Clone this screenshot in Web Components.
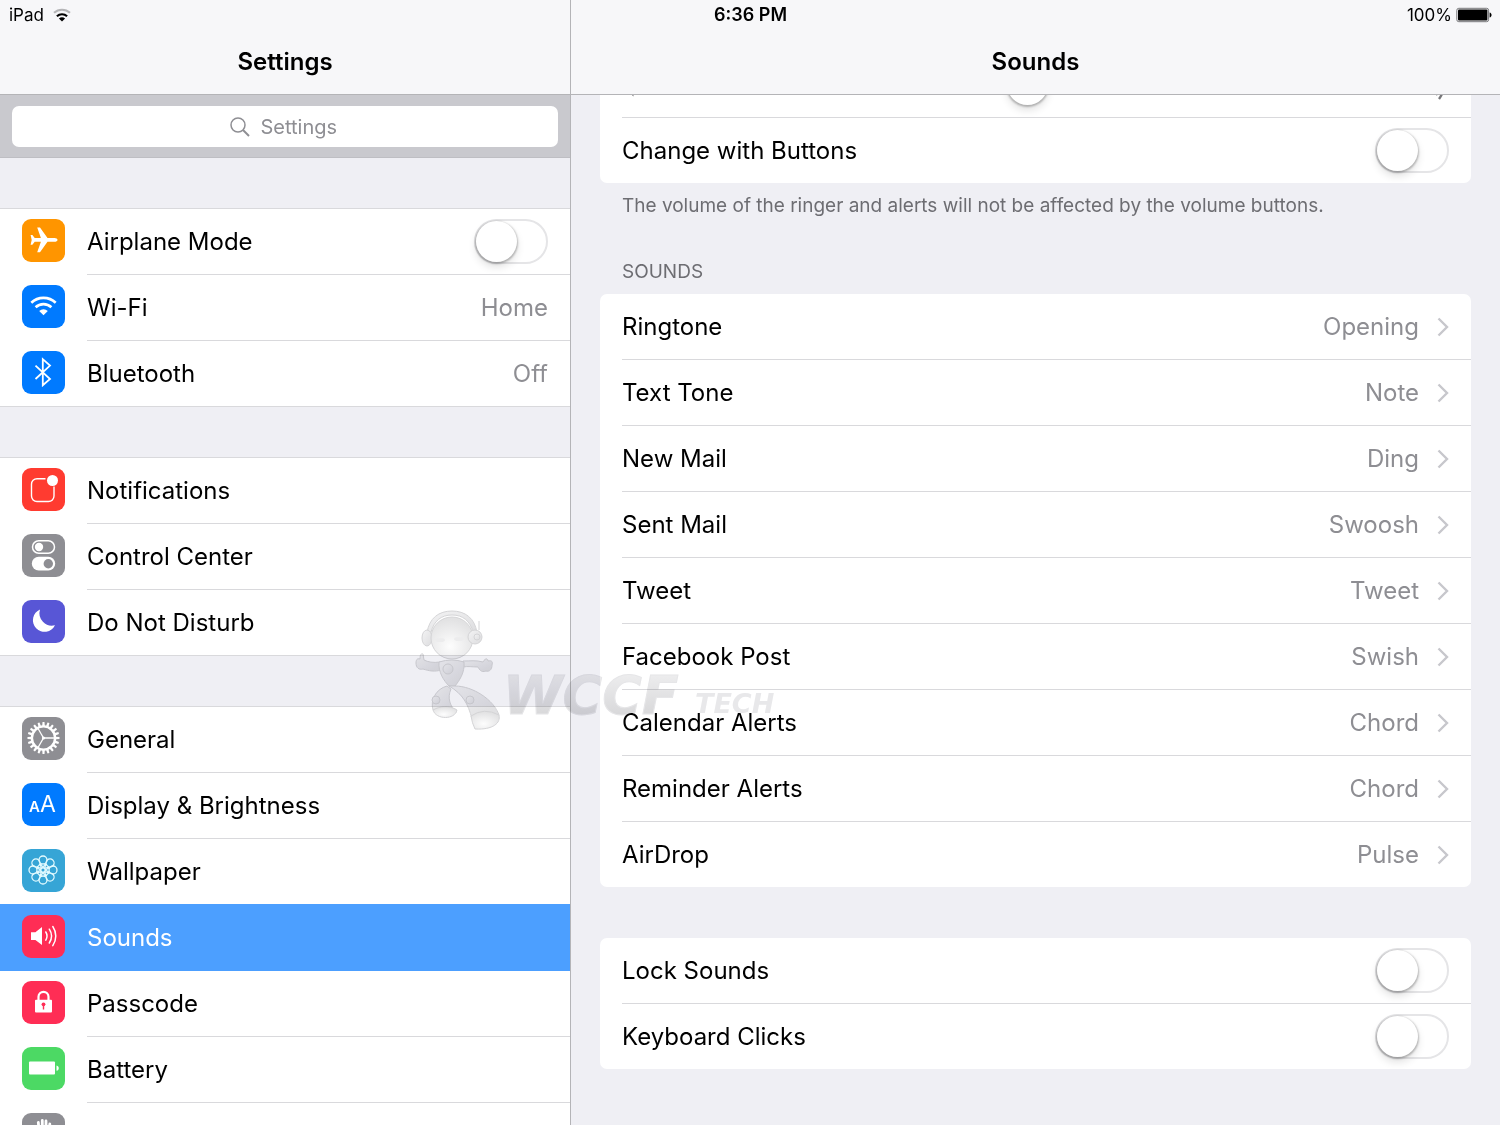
<!DOCTYPE html>
<html lang="en">
<head>
<meta charset="utf-8">
<meta name="viewport" content="width=device-width, initial-scale=1">
<title>Settings</title>
<style>
  :root {
    --bg: #efeff4;
    --line: #d9d9dc;
    --edge: #b4b4b7;
    --muted: #8e8e93;
    --active: #4c9fff;
  }
  body {
    margin: 0;
    font-family: Inter, "Liberation Sans", sans-serif;
    font-size: 24px;
    line-height: 32px;
    color: #000;
    background: var(--bg);
  }
</style>
</head>
<body>
<settings-app>
  <status-bar slot="status" device="iPad" time="6:36 PM" battery="100%"></status-bar>

  <settings-pane slot="sidebar" heading="Settings">
    <search-field placeholder="Settings"></search-field>
    <row-group>
      <settings-row icon="airplane" label="Airplane Mode" toggle></settings-row>
      <settings-row icon="wifi" label="Wi-Fi" value="Home"></settings-row>
      <settings-row icon="bluetooth" label="Bluetooth" value="Off"></settings-row>
    </row-group>
    <row-group>
      <settings-row icon="notifications" label="Notifications"></settings-row>
      <settings-row icon="control" label="Control Center"></settings-row>
      <settings-row icon="moon" label="Do Not Disturb"></settings-row>
    </row-group>
    <row-group>
      <settings-row icon="gear" label="General"></settings-row>
      <settings-row icon="display" label="Display &amp; Brightness"></settings-row>
      <settings-row icon="wallpaper" label="Wallpaper"></settings-row>
      <settings-row icon="sounds" label="Sounds" active></settings-row>
      <settings-row icon="passcode" label="Passcode"></settings-row>
      <settings-row icon="battery" label="Battery"></settings-row>
      <settings-row icon="privacy" label="Privacy"></settings-row>
    </row-group>
  </settings-pane>

  <settings-pane slot="detail" heading="Sounds" scroll="43">
    <row-group card footer="The volume of the ringer and alerts will not be affected by the volume buttons.">
      <volume-row></volume-row>
      <settings-row label="Change with Buttons" toggle></settings-row>
    </row-group>
    <row-group card heading="SOUNDS">
      <settings-row label="Ringtone" value="Opening" chevron></settings-row>
      <settings-row label="Text Tone" value="Note" chevron></settings-row>
      <settings-row label="New Mail" value="Ding" chevron></settings-row>
      <settings-row label="Sent Mail" value="Swoosh" chevron></settings-row>
      <settings-row label="Tweet" value="Tweet" chevron></settings-row>
      <settings-row label="Facebook Post" value="Swish" chevron></settings-row>
      <settings-row label="Calendar Alerts" value="Chord" chevron></settings-row>
      <settings-row label="Reminder Alerts" value="Chord" chevron></settings-row>
      <settings-row label="AirDrop" value="Pulse" chevron></settings-row>
    </row-group>
    <row-group card>
      <settings-row label="Lock Sounds" toggle></settings-row>
      <settings-row label="Keyboard Clicks" toggle></settings-row>
    </row-group>
  </settings-pane>

  <brand-mark slot="overlay"></brand-mark>
</settings-app>

<script>
// petals and teeth are the same shape turned round the centre
const around = (n, shape, offset = 0) => Array.from({ length: n }, (_, i) =>
  `<g transform="rotate(${offset + i * 360 / n} 21 21)">${shape}</g>`).join('');

const icons = {
  airplane: { bg: '#ff9500', art: `
    <path fill="#fff" d="M35.500 20.900c0-1.100-1.400-1.800-3-1.800h-7L18 8.400h-2.800L18.900 19.100h-6.200L10.400 16H8.600l1.100 4.900-1.100 4.900h1.800l2.300-3.100h6.200l-3.700 10.600H18l7.500-10.600h7c1.600 0 3-.7 3-1.800z"/>` },
  wifi: { bg: '#007aff', art: `
    <g fill="none" stroke="#fff" stroke-width="2.600"><path d="M9.300 17.800a17.500 17.500 0 0 1 24.400 0"/><path d="M13.600 22.300a11.300 11.300 0 0 1 15.800 0"/></g>
    <path fill="#fff" d="M17.200 26a6.200 6.200 0 0 1 8.600 0l-4.300 4.300z"/>` },
  bluetooth: { bg: '#007aff', art: `
    <path fill="none" stroke="#fff" stroke-width="1.800" d="M13.500 14.600 28 28l-7.200 6.300V8.200L28 14.600 13.500 28"/>` },
  notifications: { bg: '#ff3b30', art: `
    <path fill="none" stroke="#fff" stroke-width="1.400" d="M23.500 10.700H15a5.500 5.500 0 0 0-5.500 5.500V28a5.500 5.500 0 0 0 5.500 5.500h11.500A5.500 5.500 0 0 0 32 28v-9.500"/>
    <circle cx="30.500" cy="12.500" r="5.500" fill="#fff"/>` },
  control: { bg: '#8e8e93', art: `
    <rect x="10.500" y="6.800" width="22" height="12.400" rx="6.200" fill="none" stroke="#fff" stroke-width="1.500"/>
    <circle cx="17" cy="13" r="4.200" fill="#fff"/>
    <rect x="9.800" y="22.800" width="23.400" height="13.800" rx="6.900" fill="#fff"/>
    <circle cx="26.300" cy="29.700" r="4.700" fill="#8e8e93"/>` },
  moon: { bg: '#5856d6', art: `
    <path fill="#fff" d="M18 9.500A11.600 11.600 0 1 0 33 25.200 12.500 12.500 0 0 1 18 9.500z"/>` },
  gear: { bg: '#8e8e93', art: `
    <g transform="translate(.5 0)"><circle cx="21" cy="21" r="11.600" fill="none" stroke="#fff" stroke-width="2.400"/>
    ${around(20, '<path fill="#fff" d="M19.700 9l.3-4h2l.3 4z"/>')}
    ${around(3, '<path stroke="#fff" stroke-width="1.300" d="M21 21h11.500"/>')}
    <circle cx="21" cy="21" r="1.600" fill="#fff"/></g>` },
  display: { bg: '#007aff', art: `
    <g fill="#fff" font-family="Inter, sans-serif"><text x="7" y="29" font-size="15" font-weight="600">A</text><text x="18" y="29" font-size="23" font-weight="400">A</text></g>` },
  wallpaper: { bg: '#36a5d6', art: `
    <g fill="none" stroke="#e4fbff" stroke-width="1.300">
    ${around(8, '<circle cx="21" cy="11" r="4"/><path d="M21 18.800 18.600 14.500M21 18.800l2.400-4.300"/>')}
    <circle cx="21" cy="21" r="2.200"/></g>` },
  sounds: { bg: '#ff2d55', art: `
    <path fill="#fff" d="M9 17.300h4.400l6.600-5.200v18l-6.600-5.200H9z"/>
    <g fill="none" stroke="#fff" stroke-width="1.500" stroke-linecap="round"><path d="M23.800 17a8 8 0 0 1 0 8.200"/><path d="M27.300 14.200a12.500 12.500 0 0 1 0 13.800"/><path d="M30.800 11.500a17 17 0 0 1 0 19.200"/></g>` },
  passcode: { bg: '#ff2d55', art: `
    <path fill="none" stroke="#fff" stroke-width="2.200" d="M16.500 20v-4.200a5 5 0 0 1 10 0V20"/>
    <rect x="13" y="18.800" width="17" height="12.800" rx="1" fill="#fff"/>
    <circle cx="21.500" cy="23.300" r="1.900" fill="#ff2d55"/><path stroke="#ff2d55" stroke-width="1.400" d="M21.500 24v4.600"/>` },
  battery: { bg: '#4cd964', art: `
    <rect x="7" y="14.600" width="26" height="13" rx="1" fill="#fff"/><path fill="#fff" d="M34.500 18.400c3 .6 3 4.800 0 5.400z"/>` },
  privacy: { bg: '#8e8e93', art: `
    <g stroke="#fff" stroke-width="2.800" stroke-linecap="round"><path d="M16.300 9.500 17.500 22M20.300 7.500V22M24 8v14M27.800 11 27 22M31 17l-3 7"/></g>
    <path fill="#fff" d="M16 19h12v9l-4 7h-5l-6-10z"/>` }
};

class UiElement extends HTMLElement {
  constructor() {
    super();
    this.attachShadow({ mode: 'open' });
  }

  attr(name) {
    return (this.getAttribute(name) || '').replace(/&/g, '&amp;').replace(/</g, '&lt;');
  }

  connectedCallback() {
    this.shadowRoot.innerHTML = this.render();
  }
}

class SettingsApp extends UiElement {
  render() {
    return `
      <style>
        :host {
          display: grid;
          position: relative;
          grid-template-columns: 38fr 62fr;
          grid-template-rows: 100vh;
          overflow: hidden;
        }
        slot[name=status]::slotted(*) { grid-area: 1 / 1 / 2 / 3; align-self: start; z-index: 2; }
        slot[name=sidebar]::slotted(*) { grid-area: 1 / 1; }
        slot[name=detail]::slotted(*) { grid-area: 1 / 2; border-left: 1px solid var(--edge); }
      </style>
      <slot name="sidebar"></slot>
      <slot name="detail"></slot>
      <slot name="status"></slot>
      <slot name="overlay"></slot>
    `;
  }
}

class StatusBar extends UiElement {
  render() {
    return `
      <style>
        :host {
          display: grid;
          grid-template-columns: 1fr auto 1fr;
          align-items: center;
          height: 30px;
          padding: 0 8px 0 9px;
          font-size: 17px;
          line-height: 20px;
        }
        div { display: flex; align-items: center; gap: 8px; }
        .power { justify-content: flex-end; gap: 4px; }
        time { font-size: 18px; font-weight: 600; }
        svg { display: block; }
      </style>
      <div>
        <span>${this.attr('device')}</span>
        <svg width="20" height="16" viewBox="0 0 20 16" role="img" aria-label="Wi-Fi">
          <g fill="none" stroke-width="2.200"><path stroke="#b5b5b7" d="M2 5.800a12 12 0 0 1 16 0"/><path stroke="#000" d="M4.900 9.200a7.600 7.600 0 0 1 10.200 0"/></g>
          <path d="M6.900 11.600a4.600 4.600 0 0 1 6.200 0L10 14.600z"/>
        </svg>
      </div>
      <time>${this.attr('time')}</time>
      <div class="power">
        <span>${this.attr('battery')}</span>
        <svg width="36" height="16" viewBox="0 0 36 16" role="img" aria-label="Battery full">
          <rect x=".8" y="1.300" width="31.800" height="13.400" rx="2" fill="none" stroke="#77777a"/>
          <rect x="2" y="2.500" width="29.400" height="11" rx="1"/><path d="M33.600 5.500c2.600.5 2.600 4.500 0 5z"/>
        </svg>
      </div>
    `;
  }
}

class SettingsPane extends UiElement {
  connectedCallback() {
    super.connectedCallback();
    this.shadowRoot.querySelector('main').scrollTop = Number(this.getAttribute('scroll') || 0);
  }

  render() {
    return `
      <style>
        :host { display: flex; flex-direction: column; min-width: 0; min-height: 0; }
        header {
          flex: none;
          box-sizing: border-box;
          height: 95px;
          padding-top: 46px;
          border-bottom: 1px solid var(--edge);
          background: #f7f7f9;
          text-align: center;
        }
        h1 { margin: 0; font-size: 24px; line-height: 32px; font-weight: 600; }
        main { flex: 1; min-height: 0; padding-bottom: 50px; overflow: auto; scrollbar-width: none; }
      </style>
      <header><h1>${this.attr('heading')}</h1></header>
      <main><slot></slot></main>
    `;
  }
}

class SearchField extends UiElement {
  render() {
    return `
      <style>
        :host {
          display: block;
          padding: 11px 12px 10px;
          margin-bottom: 50px;
          background: #c9c9ce;
          border-bottom: 1px solid #bebec3;
        }
        label {
          display: flex;
          align-items: center;
          justify-content: center;
          gap: 11px;
          height: 41px;
          border-radius: 7px;
          background: #fff;
        }
        input {
          width: 80px;
          padding: 0;
          border: 0;
          outline: 0;
          background: none;
          font: inherit;
          font-size: 20px;
          line-height: 24px;
        }
        input::placeholder { color: var(--muted); opacity: 1; }
        input::-webkit-search-cancel-button { display: none; }
      </style>
      <label>
        <svg width="20" height="20" viewBox="0 0 20 20" fill="none" stroke="#8e8e93" aria-hidden="true">
          <circle cx="8" cy="8" r="7" stroke-width="1.500"/><path d="M13 13l6 6" stroke-width="2"/>
        </svg>
        <input type="search" placeholder="${this.attr('placeholder')}" aria-label="Search settings">
      </label>
    `;
  }
}

class RowGroup extends UiElement {
  render() {
    const heading = this.attr('heading');
    const footer = this.attr('footer');
    return `
      <style>
        :host { display: block; margin-bottom: 50px; }
        .rows { background: #fff; border: 1px solid var(--line); border-width: 1px 0; }
        :host([card]) { margin: 0 29px 51px; }
        :host([card]) .rows { border: 0; border-radius: 7px; overflow: hidden; }
        :host([footer]) { margin-bottom: 42px; }
        h2, p { margin: 0 22px; font-size: 19px; line-height: 24px; font-weight: 400; color: #6d6d72; }
        h2 { margin-bottom: 10px; }
        p { margin-top: 11px; }
      </style>
      ${heading ? `<h2>${heading}</h2>` : ''}
      <div class="rows"><slot></slot></div>
      ${footer ? `<p>${footer}</p>` : ''}
    `;
  }
}

class SettingsRow extends UiElement {
  render() {
    const label = this.attr('label');
    const value = this.attr('value');
    const icon = icons[this.getAttribute('icon')];
    const toggle = this.hasAttribute('toggle');
    const tag = toggle ? 'label' : 'a';
    const link = toggle ? '' : `href="#${label.toLowerCase().replace(/[^a-z]+/g, '-')}"`;
    const current = this.hasAttribute('active') ? 'aria-current="page"' : '';
    return `
      <style>
        :host { display: block; }
        .row {
          display: flex;
          gap: 22px;
          padding-left: 22px;
          color: inherit;
          text-decoration: none;
        }
        .icon { flex: none; width: 43px; height: 43px; margin-top: 10px; border-radius: 9px; }
        .body {
          flex: 1;
          display: flex;
          align-items: center;
          gap: 18px;
          height: 65px;
          padding-right: 22px;
          border-bottom: 1px solid var(--line);
        }
        .name { flex: 1; }
        .value { color: var(--muted); }
        :host(:last-child) .body { border-bottom: 0; }
        :host([active]) .row { position: relative; background: var(--active); color: #fff; box-shadow: 0 -1px var(--active); }
        :host([active]) .body { border-color: var(--active); }
        input {
          appearance: none;
          flex: none;
          box-sizing: border-box;
          width: 74px;
          height: 45px;
          margin: 0;
          border: 2px solid #e5e5e7;
          border-radius: 23px;
          background: #fff;
        }
        input::before {
          content: "";
          display: block;
          width: 41px;
          height: 41px;
          border-radius: 50%;
          background: #fff;
          box-shadow: 0 1px 2px 1px rgba(0, 0, 0, 0.24), 0 5px 9px rgba(0, 0, 0, 0.12);
        }
        input:checked { background: #4cd964; border-color: #4cd964; }
        input:checked::before { margin-left: 29px; }
      </style>
      <${tag} class="row" ${link} ${current}>
        ${icon ? `<svg class="icon" viewBox="0 0 43 43" style="background:${icon.bg}" aria-hidden="true">${icon.art}</svg>` : ''}
        <span class="body">
          <span class="name">${label}</span>
          ${value ? `<span class="value">${value}</span>` : ''}
          ${this.hasAttribute('chevron') ? '<svg width="12" height="20" viewBox="0 0 12 20" fill="none" stroke="#c7c7cc" stroke-width="2.400" aria-hidden="true"><path d="M1.500 1.500 10 10l-8.500 8.500"/></svg>' : ''}
          ${toggle ? '<input type="checkbox" role="switch">' : ''}
        </span>
      </${tag}>
    `;
  }
}

class VolumeRow extends UiElement {
  render() {
    return `
      <style>
        :host { display: block; padding-left: 22px; }
        label {
          display: flex;
          align-items: center;
          gap: 24px;
          height: 65px;
          padding-right: 22px;
          border-bottom: 1px solid var(--line);
        }
        input {
          appearance: none;
          flex: 1;
          height: 3px;
          margin: 0;
          background: linear-gradient(to right, #007aff 50%, #b7b7b7 50%);
        }
        input::-webkit-slider-thumb {
          appearance: none;
          width: 41px;
          height: 41px;
          border-radius: 50%;
          background: #fff;
          box-shadow: 0 1px 2px 1px rgba(0, 0, 0, 0.24), 0 5px 9px rgba(0, 0, 0, 0.12);
        }
      </style>
      <label>
        <svg width="16" height="24" viewBox="0 0 16 24" fill="#77777a" aria-hidden="true"><path d="M1 8.500h4l6.500-6v21l-6.500-6H1z"/></svg>
        <input type="range" min="0" max="100" value="50" aria-label="Ringer and alerts volume">
        <svg width="32" height="32" viewBox="0 0 32 32" aria-hidden="true">
          <path fill="#77777a" d="M1 12h5l7-6v20l-7-6H1z"/>
          <g fill="none" stroke="#77777a" stroke-width="2.400"><path d="M16 11q4 5 0 10M19 6q7 10 0 20M22 2q10 14 0 28"/></g>
        </svg>
      </label>
    `;
  }
}

class BrandMark extends UiElement {
  render() {
    return `
      <style>
        :host {
          position: absolute;
          z-index: 1;
          left: 415px;
          top: 608px;
          pointer-events: none;
          mix-blend-mode: multiply;
        }
        svg { display: block; }
      </style>
      <svg width="364" height="126" viewBox="0 0 364 126">
        <defs>
          <radialGradient id="ball" cx="45%" cy="70%" r="65%"><stop offset="0" stop-color="#fdfdfd"/><stop offset="1" stop-color="#e2e2e3"/></radialGradient>
          <linearGradient id="limb" x1="0" y1="0" x2="1" y2="1"><stop offset="0" stop-color="#f3f3f4"/><stop offset="1" stop-color="#dddddf"/></linearGradient>
          <linearGradient id="steel" x1="0" y1="0" x2="0" y2="1"><stop offset="0" stop-color="#f2f2f3"/><stop offset="1" stop-color="#d2d2d4"/></linearGradient>
        </defs>
        <g stroke="#d4d4d6" stroke-width="1" fill="url(#limb)">
          <path d="M12 25C14 10 24 3 37 3s23 7 25 22l-4-1C55 13 48 7 37 7S19 13 16 24z"/>
          <ellipse cx="12" cy="30" rx="5" ry="8"/>
          <path d="M25 54c-7 1-12 0-16-2l-1-6c-2-1-3 1-3 5-3-1-4 1-4 4 0 5 3 7 7 6 6 2 12 3 18 1z"/>
          <path d="M48 53c7 0 13-1 20 1 2-4 5-4 5-1 4-1 5 1 4 4 0 5-3 7-6 6-5 2-7-2-8-4-6 0-10-1-15 0z"/>
          <path d="M24 54q13-4 25 0c1 11-5 19-9 24h-6c-5-5-11-14-10-24z"/>
          <circle cx="33" cy="61" r="5"/>
          <path d="M32 78C21 81 15 92 18 102q12-5 24 2c-7-5-10-14-6-23z"/>
          <path fill="url(#ball)" d="M18 102c3 10 22 10 24 0-8-5-17-4-24 0z"/>
          <path d="M34 78h6C58 78 79 92 84 107l-27 4C53 96 48 86 34 78z"/>
          <path fill="url(#ball)" d="M56 108q13-9 28-1c2 8-6 15-24 14q-3-6-4-13z"/>
          <circle cx="21" cy="92" r="4"/><circle cx="55" cy="92" r="4"/>
          <circle cx="37" cy="30" r="21" fill="url(#ball)"/>
          <circle cx="60" cy="29" r="7"/><circle cx="62" cy="29" r="3"/>
          <path d="M64 13v9"/>
        </g>
        <g fill="#ececed"><ellipse cx="25" cy="32" rx="5" ry="2"/><ellipse cx="44" cy="31" rx="5" ry="2"/></g>
        <g font-family="DejaVu Sans, sans-serif" font-weight="700" font-style="italic" fill="url(#steel)">
          <text x="88" y="106" font-size="54" stroke="#e6e6e8" stroke-width="1">WCCF</text>
          <text x="280" y="105" font-size="27" fill="#e8e8ea">TECH</text>
        </g>
      </svg>
    `;
  }
}

customElements.define('settings-app', SettingsApp);
customElements.define('status-bar', StatusBar);
customElements.define('search-field', SearchField);
customElements.define('row-group', RowGroup);
customElements.define('settings-row', SettingsRow);
customElements.define('volume-row', VolumeRow);
customElements.define('brand-mark', BrandMark);
// last, so its rows already have their height when it scrolls
customElements.define('settings-pane', SettingsPane);
</script>
</body>
</html>
